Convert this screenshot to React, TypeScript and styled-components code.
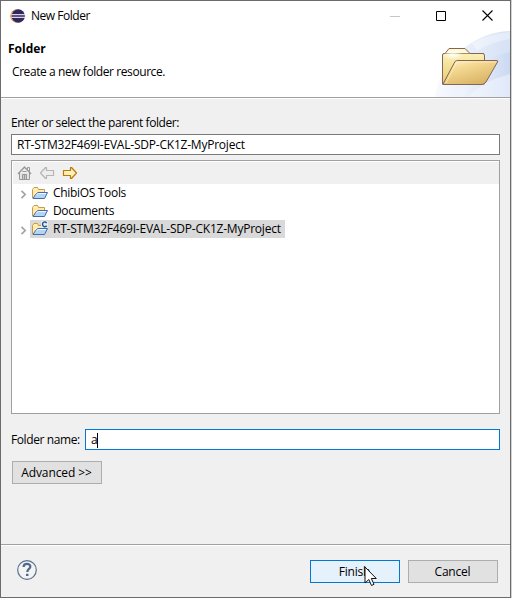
import React from 'react';
import styled, { createGlobalStyle } from 'styled-components';

const GlobalStyle = createGlobalStyle`
  * { box-sizing: border-box; }
  body { margin: 0; background: #d2d2d2; overflow: hidden; }
  svg { display: block; flex: none; }
`;

const Window = styled.main`
  position: relative;
  display: flex;
  flex-direction: column;
  width: 511px;
  height: 598px;
  border: 1px solid #6b6b6b;
  background: #f0f0f0;
  color: #000;
  font: 12px/16px 'Open Sans', 'Noto Sans', sans-serif;
`;

const Text = styled.span<{ $track?: number; $bold?: boolean }>`
  white-space: pre;
  letter-spacing: ${p => p.$track ?? -0.2}px;
  font-weight: ${p => (p.$bold ? 700 : 400)};
`;

const Header = styled.header`
  position: relative;
  height: 98px;
  flex: none;
  background: #fff;
  border-bottom: 1px solid #fff;
  box-shadow: inset 0 -1px #a0a0a0;
`;

const Banner = styled.svg`
  position: absolute;
  right: 0;
  bottom: 1px;
`;

const TitleBar = styled.div`
  position: relative;
  display: flex;
  align-items: center;
  height: 29px;
  padding-left: 9px;
  gap: 5px;
`;

const WindowControls = styled.div`
  display: flex;
  margin-left: auto;
`;

const Control = styled.span`
  display: flex;
  width: 46px;
  height: 28px;
  align-items: center;
  justify-content: center;
`;

const Heading = styled.div`
  display: flex;
  flex-direction: column;
  gap: 7px;
  padding: 11px 0 0 7px;
`;

const Description = styled.div`
  padding-left: 4px;
`;

const Content = styled.section`
  display: flex;
  flex-direction: column;
  height: 445px;
  padding: 16px 10px 0;
`;

const Field = styled.div<{ $active?: boolean }>`
  display: flex;
  flex: 1;
  align-items: center;
  height: 21px;
  padding: 1px 0 0 5px;
  border: 1px solid ${p => (p.$active ? '#0078d7' : '#7a7a7a')};
  background: #fff;
`;

const ParentRow = styled.div`
  display: flex;
  margin: 3px 0 5px;
`;

const Caret = styled.i`
  width: 1px;
  height: 15px;
  background: #000;
`;

const TreePanel = styled.div`
  height: 254px;
  border: 1px solid #a0a0a0;
  background: #fff;
  padding: 1px 0 0 1px;
`;

const TreeToolbar = styled.div`
  display: flex;
  align-items: center;
  gap: 7px;
  height: 22px;
  padding: 0 0 0 3px;
  background: #f0f0f0;
`;

const TreeRow = styled.div`
  display: flex;
  height: 18px;
`;

const Twisty = styled.span`
  display: flex;
  width: 17px;
  padding: 6px 0 0 7px;
`;

const TreeItem = styled.div<{ $selected?: boolean }>`
  display: flex;
  align-items: center;
  gap: 5px;
  padding: 0 4px 0 2px;
  background: ${p => (p.$selected ? '#d9d9d9' : 'transparent')};
`;

const NameRow = styled.div`
  display: flex;
  align-items: center;
  gap: 5px;
  margin: 15px 0 11px;
`;

const NameLabel = styled.label`
  width: 69px;
  padding-top: 1px;
`;

const Button = styled.button<{ $primary?: boolean }>`
  display: flex;
  align-items: center;
  justify-content: center;
  width: 90px;
  height: 23px;
  padding: 1px 1px 0 0;
  font: inherit;
  color: inherit;
  border: 1px solid ${p => (p.$primary ? '#0078d7' : '#adadad')};
  background: ${p => (p.$primary ? '#e5f1fb' : '#e1e1e1')};
`;

const AdvancedRow = styled.div`
  padding-left: 1px;
`;

const Footer = styled.footer`
  display: flex;
  height: 53px;
  gap: 8px;
  padding: 15px 12px 0 15px;
  border-top: 1px solid #a0a0a0;
  box-shadow: inset 0 1px #fff;
`;

const HelpSlot = styled.div`
  margin: -1px auto 0 0;
`;

const Pointer = styled.svg`
  position: absolute;
  left: 363px;
  top: 565px;
`;

const HeaderArt = () => (
  <Banner width="76" height="66" viewBox="0 0 76 66">
    <defs>
      <linearGradient id="sky" x1="0" x2="1"><stop stopColor="#f8faff" /><stop offset="1" stopColor="#d5e1f5" /></linearGradient>
      <linearGradient id="sweep" x1="0" x2="1"><stop stopColor="#fff" stopOpacity=".2" /><stop offset="1" stopColor="#bfd0ef" stopOpacity=".5" /></linearGradient>
      <linearGradient id="back" x2="0" y2="1"><stop stopColor="#fff7c2" /><stop offset="1" stopColor="#e5cc6d" /></linearGradient>
      <linearGradient id="front" x2=".65" y2="1"><stop stopColor="#fff5d5" /><stop offset=".35" stopColor="#f5da94" /><stop offset="1" stopColor="#d8b263" /></linearGradient>
      <radialGradient id="shine"><stop stopColor="#fff" /><stop offset="1" stopColor="#fff" stopOpacity="0" /></radialGradient>
    </defs>
    <path d="M1 66C5 32 38 1 76 0V66Z" fill="url(#sky)" />
    <path d="M22 66C33 40 52 26 76 21V66Z" fill="url(#sweep)" />
    <path d="M35 66C46 52 60 48 76 43V66Z" fill="#f5f8ff" opacity=".5" />
    <path d="M38 12Q55 3 76 1V8Q55 12 43 20Z" fill="#fff" opacity=".35" />
    <path d="M8.5 24Q8.5 22.5 10 22.5H11L15 17.5H31L36 22.5H49Q50.5 22.5 50.5 25V53H8.5Z" fill="url(#back)" stroke="#85645b" />
    <path d="M12 23L16 18.5H30.5L35 23Z" fill="#fffbd7" />
    <path d="M9 22.5H50" stroke="#85645b" opacity=".75" />
    <ellipse cx="19" cy="24" rx="10" ry="5" fill="url(#shine)" />
    <path d="M9 53L21 30.5Q22 29.5 24 29.5H63Q64 29.5 63.5 31L52 51Q50 53.5 48 53.5H10Q8 53.5 9 53Z" fill="url(#front)" stroke="#85645b" />
    <path d="M12 52L23 31H62" fill="none" stroke="#fff0bd" strokeWidth=".7" />
  </Banner>
);

const EclipseIcon = () => (
  <svg width="16" height="16" viewBox="0 0 16 16">
    <circle cx="7" cy="8" r="6.8" fill="#f7941e" />
    <circle cx="7.8" cy="8" r="6.6" fill="#fff" />
    <circle cx="8.2" cy="8" r="6.7" fill="#33285d" />
    <path d="M1.5 6.5H15M1.3 9.5H15.2" stroke="#d7d5e9" strokeWidth="1" />
    <path d="M1.5 8H15" stroke="#8c84b1" strokeWidth="1" />
  </svg>
);

const HomeIcon = () => (
  <svg width="16" height="16" viewBox="0 0 16 16" fill="none" stroke="#999">
    <path d="M3.5 8V14.5H13.5V8" fill="#e4e4e4" />
    <path d="M2 9L8.5 2L15 9" strokeWidth="1.5" />
    <path d="M11.5 5V2.5H13.5V7" />
    <path d="M6.5 14V9.5H10.5V14M8.5 9V14" fill="#ccc" />
    <path d="M6.5 6.5H10.5" />
  </svg>
);

const ArrowIcon = ({ forward = false }: { forward?: boolean }) => (
  <svg width="16" height="16" viewBox="0 0 16 16">
    <path
      d={forward ? 'M1.5 5.5H8.5V2.5H9.5L14.5 8L9.5 13.5H8.5V10.5H1.5Z' : 'M14.5 5.5H7.5V2.5H6.5L1.5 8L6.5 13.5H7.5V10.5H14.5Z'}
      fill={forward ? '#fff0b8' : '#eee'}
      stroke={forward ? '#b87a0b' : '#b5b5b5'}
      strokeWidth="1.2"
      strokeLinejoin="round"
    />
  </svg>
);

const FolderIcon = ({ project = false }: { project?: boolean }) => (
  <svg width="16" height="16" viewBox="0 0 16 16">
    <path d="M.5 13V4.5L2 2.5H5.5L6.5 4.5H12.5V8" fill="#fff1bc" stroke="#c9994d" />
    <path d="M2 6V10M2 6H11" stroke="#ffe097" fill="none" />
    <path d="M1 13.5L3.5 9.5L6 7.5H15.5L12.5 13.5Z" fill="#b4d4f5" stroke="#426da9" strokeLinejoin="round" />
    <path d="M4.5 9.5L6.5 8.5H14" stroke="#eef7ff" fill="none" />
    {project && (
      <>
        <path d="M9 0H16V7H9Z" fill="#e9edf0" />
        <path d="M14.8 1.8C12.8.2 10.5 1.2 10.5 3.3S12.8 6.4 14.8 4.9" fill="none" stroke="#235c91" strokeWidth="1.5" />
      </>
    )}
  </svg>
);

const HelpIcon = () => (
  <svg width="22" height="22" viewBox="0 0 22 22" fill="none">
    <circle cx="11" cy="11" r="9.3" fill="#f4f4f4" stroke="#5a7190" strokeWidth="1.2" />
    <path d="M7.6 8C7.6 3.8 14.5 3.9 14.3 7.7C14.2 10 11.3 10 11.3 13" stroke="#526b8d" strokeWidth="2.3" />
    <path d="M10 14.8H12.5V17H10Z" fill="#526b8d" />
  </svg>
);

const folders = [
  { name: 'ChibiOS Tools', expandable: true, track: -0.32 },
  { name: 'Documents', expandable: false, track: -0.36 },
  { name: 'RT-STM32F469I-EVAL-SDP-CK1Z-MyProject', expandable: true, selected: true, track: -0.22 },
];

export default function App() {
  return (
    <>
      <GlobalStyle />
      <Window>
        <Header>
          <HeaderArt />
          <TitleBar>
            <EclipseIcon />
            <Text $track={-0.48}>New Folder</Text>
            <WindowControls>
              <Control><svg width="10" height="10"><path d="M0 5.5H10" stroke="#c6c6c6" /></svg></Control>
              <Control><svg width="10" height="10"><path d="M.5 .5H9.5V9.5H.5Z" fill="none" stroke="#000" /></svg></Control>
              <Control><svg width="11" height="11"><path d="M.5 .5L10.5 10.5M10.5 .5L.5 10.5" stroke="#000" strokeWidth="1.1" /></svg></Control>
            </WindowControls>
          </TitleBar>
          <Heading>
            <Text $bold $track={0}>Folder</Text>
            <Description><Text $track={-0.42}>Create a new folder resource.</Text></Description>
          </Heading>
        </Header>
        <Content>
          <Text $track={-0.41}>Enter or select the parent folder:</Text>
          <ParentRow><Field><Text $track={-0.22}>RT-STM32F469I-EVAL-SDP-CK1Z-MyProject</Text></Field></ParentRow>
          <TreePanel>
            <TreeToolbar><HomeIcon /><ArrowIcon /><ArrowIcon forward /></TreeToolbar>
            {folders.map(folder => (
              <TreeRow key={folder.name}>
                <Twisty>{folder.expandable && <svg width="8" height="9"><path d="M1.5 .8L5.2 4.5L1.5 8.2" fill="none" stroke="#a3a3a3" strokeWidth="1.7" /></svg>}</Twisty>
                <TreeItem $selected={folder.selected}>
                  <FolderIcon project={folder.selected} />
                  <Text $track={folder.track}>{folder.name}</Text>
                </TreeItem>
              </TreeRow>
            ))}
          </TreePanel>
          <NameRow>
            <NameLabel><Text $track={-0.4}>Folder name:</Text></NameLabel>
            <Field $active><Text>a</Text><Caret /></Field>
          </NameRow>
          <AdvancedRow><Button><Text $track={-0.1}>Advanced &gt;&gt;</Text></Button></AdvancedRow>
        </Content>
        <Footer>
          <HelpSlot><HelpIcon /></HelpSlot>
          <Button $primary><Text>Finish</Text></Button>
          <Button><Text>Cancel</Text></Button>
        </Footer>
        <Pointer width="14" height="21" viewBox="0 0 14 21"><path d="M1 1V17L4.8 13.5L7.5 19.5L10 18.3L7.3 12.5H12.3Z" fill="#fff" stroke="#111" /></Pointer>
      </Window>
    </>
  );
}
